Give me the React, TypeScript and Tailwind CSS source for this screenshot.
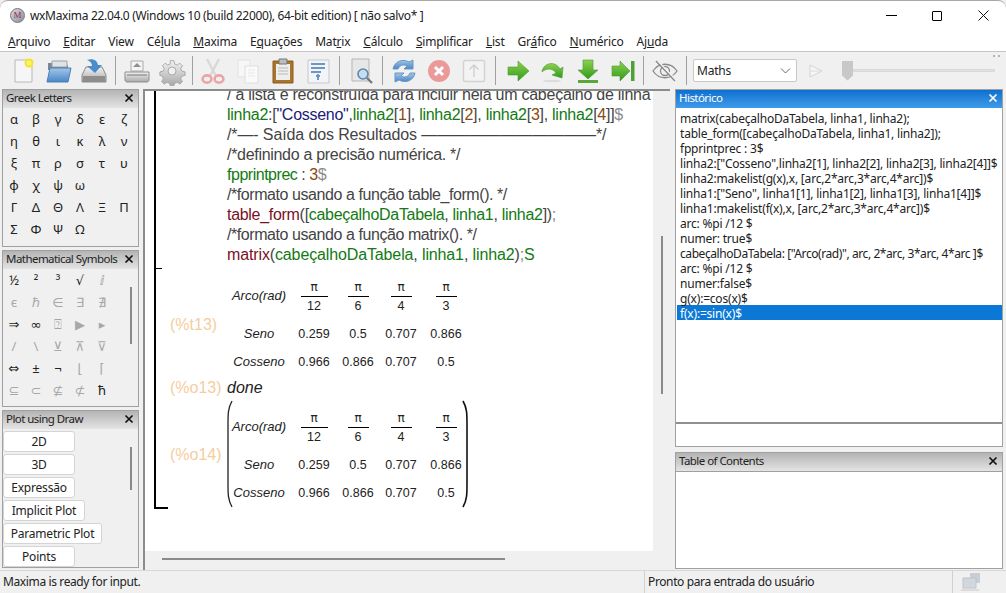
import React from "react";

const S = ({ w = 30, children }: { w?: number; children: React.ReactNode }) => (
  <svg width={w} height={30} viewBox="0 0 30 30" fill="none">{children}</svg>
);

const Defs = () => (
  <svg width="0" height="0" className="absolute">
    <defs>
      <linearGradient id="gr" x1="0" y1="0" x2="0" y2="1"><stop offset="0" stopColor="#8fd14f" /><stop offset="1" stopColor="#2f9a1c" /></linearGradient>
      <linearGradient id="bl" x1="0" y1="0" x2="0" y2="1"><stop offset="0" stopColor="#a3c6e8" /><stop offset="1" stopColor="#4a86c8" /></linearGradient>
      <linearGradient id="gy" x1="0" y1="0" x2="0" y2="1"><stop offset="0" stopColor="#f2f2f2" /><stop offset="1" stopColor="#a8a8a8" /></linearGradient>
    </defs>
  </svg>
);

const icons: Record<string, React.ReactNode> = {
  newdoc: <S><path d="M6 4h17v22H6z" fill="#f6f6f6" stroke="#b8b8b8" /><circle cx="20" cy="7" r="4.5" fill="#f3e52f" /><circle cx="20" cy="7" r="2.5" fill="#fbf36a" /></S>,
  open: <S><path d="M4 7h8l2 2h10v5H4z" fill="#7d8793" /><path d="M8 5h15v6H8z" fill="#dfe3e6" stroke="#9aa2a8" /><path d="M3 26l3-14h21l-3 14z" fill="url(#bl)" stroke="#4a7fb4" /></S>,
  save: <S><path d="M3 19l4-8h16l4 8v7H3z" fill="url(#gy)" stroke="#8a8a8a" /><path d="M4 20h22v6H4z" fill="#8d8d8d" /><path d="M8 4c6-2 10 0 11 5h4l-7 8-8-7h5c0-3-2-5-5-6z" fill="#4a8ccc" /></S>,
  print: <S><path d="M9 5h12v10H9z" fill="#f4f4f4" stroke="#aaa" /><path d="M15 7l-4 4h8z" fill="#8f8f8f" /><path d="M3 16h24v8c0 1-1 2-2 2H5c-1 0-2-1-2-2z" fill="url(#gy)" stroke="#8d8d8d" /><path d="M5 19h20" stroke="#777" /></S>,
  gear: <S><path d="M13 3h4l1 4 3 1 3-2 3 3-2 3 1 3 4 1v4l-4 1-1 3 2 3-3 3-3-2-3 1-1 3h-4l-1-3-3-1-3 2-3-3 2-3-1-3-3-1v-4l4-1 1-3-2-3 3-3 3 2 3-1z" transform="translate(2 2) scale(.87)" fill="url(#gy)" stroke="#a3a3a3" /><circle cx="15" cy="15" r="4" fill="#f0f0f0" stroke="#aaa" /></S>,
  cut: <S><path d="M9 3l9 17M21 3L12 20" stroke="#d8d8d8" strokeWidth="2.4" /><ellipse cx="9" cy="23" rx="4.4" ry="3.6" stroke="#eaa5a5" strokeWidth="2.6" /><ellipse cx="21" cy="23" rx="4.4" ry="3.6" stroke="#eaa5a5" strokeWidth="2.6" /></S>,
  copy: <S><path d="M5 4h12v17H5z" fill="#f7f7f7" stroke="#e2e2e2" /><path d="M12 10h13v17H12z" fill="#fafafa" stroke="#dedede" /><path d="M15 14h7M15 17h7M15 20h7" stroke="#e8e8e8" /></S>,
  paste: <S><path d="M5 5h20v22H5z" fill="#a8752f" stroke="#8a5c20" /><path d="M8 8h14v16H8z" fill="#eeeeee" /><path d="M11 3h8v5h-8z" fill="#bdbdbd" stroke="#777" /><path d="M10 12h10M10 15h10M10 18h10" stroke="#b9b9b9" /></S>,
  doc: <S><path d="M5 4h21v23H5z" fill="#f2f4f7" stroke="#c4c8cc" /><path d="M8 8h14M8 12h14M8 16h10M13 20h4" stroke="#6f97c4" strokeWidth="2" /><path d="M15 18v6" stroke="#6f97c4" strokeWidth="2" /></S>,
  find: <S><path d="M6 3h17v22H6z" fill="#e7e7e7" stroke="#b5b5b5" /><circle cx="17" cy="18" r="5" fill="#c7dcf0" stroke="#5d87ad" strokeWidth="1.6" /><path d="M21 22l5 5" stroke="#7a7a7a" strokeWidth="2.4" /></S>,
  refresh: <S><path d="M4 13C5 6 13 2 20 6l4-2v9h-9l3-3c-4-2-7-1-9 3z" fill="url(#bl)" stroke="#6a98c6" /><path d="M26 17c-1 7-9 11-16 7l-4 2v-9h9l-3 3c4 2 7 1 9-3z" fill="url(#bl)" stroke="#6a98c6" /></S>,
  stop: <S><circle cx="15" cy="15" r="11" fill="#eb9a9a" /><path d="M11 11l8 8M19 11l-8 8" stroke="#fff" strokeWidth="3" /></S>,
  up: <S><rect x="4.5" y="4.5" width="21" height="21" rx="2" fill="#f3f3f3" stroke="#d2d2d2" strokeWidth="1.4" /><path d="M15 21V9M10.5 13.5L15 9l4.5 4.5" stroke="#cfcfcf" strokeWidth="1.4" /></S>,
  right: <S><path d="M5 11h10V5l11 10-11 10v-6H5z" fill="url(#gr)" stroke="#4b9a34" strokeWidth=".6" /></S>,
  curve: <S><path d="M4 16C5 7 17 4 22 13l3-2-1 11-10-3 4-2c-3-5-10-5-14-1z" fill="url(#gr)" stroke="#4b9a34" strokeWidth=".6" /><ellipse cx="14" cy="25" rx="9" ry="1.3" fill="#dcdcdc" /></S>,
  down: <S><path d="M10 4h10v10h5L15 23 5 14h5z" fill="url(#gr)" stroke="#4b9a34" strokeWidth=".6" /><path d="M5 24h20v3H5z" fill="#58a83c" /></S>,
  end: <S><path d="M4 10h8V5l10 10-10 10v-5H4z" fill="url(#gr)" stroke="#4b9a34" strokeWidth=".6" /><path d="M23 5h3.5v20H23z" fill="#4da235" /></S>,
  eye: <S><path d="M3 15c6-9 18-9 24 0-6 9-18 9-24 0z" stroke="#8a8a8a" strokeWidth="1.3" /><circle cx="15" cy="15" r="4.5" stroke="#8a8a8a" strokeWidth="1.3" /><path d="M6 5l19 20" stroke="#8a8a8a" strokeWidth="1.5" /><path d="M8 5l19 20" stroke="#f0f0f0" strokeWidth="1.2" /></S>,
};

const Btn = ({ n }: { n: string }) => <div className="w-[35px] flex justify-center shrink-0">{icons[n]}</div>;
const Sep = ({ w }: { w: string }) => (
  <div className={`${w} h-[29px] shrink-0 flex justify-center`}><div className="w-px h-full bg-[#a0a0a0]" /></div>
);

const Head = ({ t, blue }: { t: string; blue?: boolean }) => (
  <div className={`h-[18px] pb-[2px] flex items-center justify-between pl-[3px] pr-[4px] text-[11.5px] tracking-[-0.55px] whitespace-nowrap shrink-0 ${blue ? "bg-gradient-to-b from-[#0a70cf] to-[#3f9bea] text-white" : "bg-gradient-to-b from-[#b4b4b4] to-[#e4e4e4] text-[#222]"}`}>
    <span>{t}</span>
    <svg width="10" height="10" viewBox="0 0 10 10"><path d="M1.5 1.5l7 7M8.5 1.5l-7 7" stroke={blue ? "#fff" : "#111"} strokeWidth="1.7" /></svg>
  </div>
);

const Glyphs = ({ cells }: { cells: [string, number][] }) => (
  <div className="flex-1 grid grid-cols-[repeat(6,22px)] auto-rows-[22px] text-[13px] leading-[22px] text-center tracking-normal font-['Noto_Sans','DejaVu_Sans',sans-serif]">
    {cells.map(([g, o], i) => (
      <span key={i} className={o === 1 ? "text-[#222]" : "text-[#a8a8a8]"}>{g}</span>
    ))}
  </div>
);

const greek = "α β γ δ ε ζ η θ ι κ λ ν ξ π ρ σ τ υ φ χ ψ ω _ _ Γ Δ Θ Λ Ξ Π Σ Φ Ψ Ω _ _".split(" ").map((c) => [c === "_" ? "" : c, 1] as [string, number]);

const mathCells: [string, number][] = [
  ["½", 1], ["²", 1], ["³", 1], ["√", 1], ["ⅈ", 2], ["", 0],
  ["ϵ", 2], ["ℏ", 2], ["∈", 2], ["∃", 2], ["∄", 2], ["", 0],
  ["⇒", 1], ["∞", 1], ["⍰", 2], ["▶", 2], ["▸", 2], ["", 0],
  ["/", 2], ["\\", 2], ["⊻", 2], ["⊼", 2], ["⊽", 2], ["", 0],
  ["⇔", 1], ["±", 1], ["¬", 1], ["⌊", 2], ["⌈", 2], ["", 0],
  ["⊆", 2], ["⊂", 2], ["⊈", 2], ["⊄", 2], ["ħ", 1], ["", 0],
];

const G = ({ children }: { children: React.ReactNode }) => <span className="text-[#127a12]">{children}</span>;
const N = ({ children }: { children: React.ReactNode }) => <span className="text-[#8a4a10]">{children}</span>;
const R = ({ children }: { children: React.ReactNode }) => <span className="text-[#7a0f1f]">{children}</span>;
const D = ({ children }: { children: React.ReactNode }) => <span className="text-[#8a8a8a]">{children}</span>;

const Frac = ({ d, w }: { d: string; w: string }) => (
  <div className="flex flex-col items-center">
    <div className="h-[15px] leading-[17px] font-['DejaVu_Sans',sans-serif] text-[12px]">π</div>
    <div className={`${w} h-px bg-black mt-[2px] mb-[1px]`} />
    <div className="h-[17px] leading-[17px]">{d}</div>
  </div>
);

const Table = () => (
  <div className="grid grid-cols-[64px_46px_42px_44px_46px] text-[12.5px] text-[#222] text-center items-center">
    <div className="italic text-[13px] h-[32px] leading-[32px] mb-[3px]">Arco(rad)</div>
    <Frac d="12" w="w-[27px]" />
    <Frac d="6" w="w-[21px]" />
    <Frac d="4" w="w-[21px]" />
    <Frac d="3" w="w-[21px]" />
    {["Seno", "0.259", "0.5", "0.707", "0.866"].map((t, i) => (
      <div key={i} className={`h-[28px] leading-[28px] mt-[5px] ${i === 0 ? "italic text-[13px]" : ""}`}>{t}</div>
    ))}
    {["Cosseno", "0.966", "0.866", "0.707", "0.5"].map((t, i) => (
      <div key={i} className={`h-[28px] leading-[28px] ${i === 0 ? "italic text-[13px]" : ""}`}>{t}</div>
    ))}
  </div>
);

const Label = ({ t, mb }: { t: string; mb?: string }) => (
  <div className={`w-[71px] pl-[14px] text-[16px] text-[#f5cda0] shrink-0 tracking-normal ${mb ?? ""}`}>{t}</div>
);

const hist = [
  "matrix(cabeçalhoDaTabela, linha1, linha2);",
  "table_form([cabeçalhoDaTabela, linha1, linha2]);",
  "fpprintprec : 3$",
  'linha2:["Cosseno",linha2[1], linha2[2], linha2[3], linha2[4]]$',
  "linha2:makelist(g(x),x, [arc,2*arc,3*arc,4*arc])$",
  'linha1:["Seno", linha1[1], linha1[2], linha1[3], linha1[4]]$',
  "linha1:makelist(f(x),x, [arc,2*arc,3*arc,4*arc])$",
  "arc: %pi /12 $",
  "numer: true$",
  'cabeçalhoDaTabela: ["Arco(rad)", arc, 2*arc, 3*arc, 4*arc ]$',
  "arc: %pi /12 $",
  "numer:false$",
  "g(x):=cos(x)$",
  "f(x):=sin(x)$",
];

const menus: [string, string, string][] = [
  ["", "A", "rquivo"], ["", "E", "ditar"], ["View", "", ""], ["Cé", "l", "ula"], ["", "M", "axima"], ["E", "q", "uações"],
  ["Mat", "r", "ix"], ["", "C", "álculo"], ["", "S", "implificar"], ["", "L", "ist"], ["Gr", "á", "fico"], ["", "N", "umérico"], ["Aj", "u", "da"],
];

export default function App() {
  return (
    <div className="w-[1006px] h-[593px] overflow-hidden flex flex-col bg-[#f0f0f0] font-['Noto_Sans','Open_Sans',sans-serif] tracking-[-0.2px] text-[#111] relative">
      <Defs />
      {/* title */}
      <div className="h-[32px] pb-[2px] bg-white rounded-t-[8px] border-t border-[#a8a8a8] flex items-center shrink-0">
        <div className="w-[15px] h-[15px] ml-[10px] rounded-full bg-gradient-to-br from-[#d9d9e2] to-[#8e8e9c] border border-[#777] flex items-center justify-center text-[9px] leading-none font-['Liberation_Serif',serif] text-[#9a2a4a]">M</div>
        <div className="ml-[5px] text-[12px] tracking-[-0.33px] text-[#222] whitespace-nowrap">wxMaxima 22.04.0 (Windows 10 (build 22000), 64-bit edition) [ não salvo* ]</div>
        <div className="ml-auto flex items-center">
          <div className="w-[46px] flex justify-center"><div className="w-[11px] h-px bg-black" /></div>
          <div className="w-[46px] flex justify-center"><div className="w-[10px] h-[10px] border border-black rounded-[1px]" /></div>
          <div className="w-[46px] flex justify-center"><svg width="11" height="11" viewBox="0 0 11 11"><path d="M.5.5l10 10M10.5.5l-10 10" stroke="#111" /></svg></div>
        </div>
      </div>
      {/* menu */}
      <div className="h-[20px] bg-white border-b border-[#c4c4c4] flex items-center pl-[8px] gap-[13px] text-[12px] text-[#222] shrink-0 whitespace-nowrap">
        {menus.map(([a, u, b], i) => (
          <span key={i}>{a}<span className="underline">{u}</span>{b}</span>
        ))}
      </div>
      {/* toolbar */}
      <div className="h-[37px] bg-[#f0f0f0] flex items-center pl-[6px] shrink-0 relative">
        <Btn n="newdoc" /><Btn n="open" /><Btn n="save" /><Sep w="w-[8px]" />
        <Btn n="print" /><Btn n="gear" /><Sep w="w-[6px]" />
        <Btn n="cut" /><Btn n="copy" /><Btn n="paste" /><Btn n="doc" /><Sep w="w-[8px]" />
        <Btn n="find" /><Sep w="w-[8px]" />
        <Btn n="refresh" /><Btn n="stop" /><Btn n="up" /><Sep w="w-[9px]" />
        <Btn n="right" /><Btn n="curve" /><Btn n="down" /><Btn n="end" /><Sep w="w-[7px]" />
        <Btn n="eye" /><Sep w="w-[8px]" />
        <div className="ml-[3px] w-[104px] h-[23px] bg-white border border-[#c8c8c8] rounded-[2px] flex items-center justify-between pl-[3px] pr-[5px] text-[12px] text-[#222] shrink-0">
          <span>Maths</span>
          <svg width="11" height="6" viewBox="0 0 11 6"><path d="M1 .5l4.5 4.5L10 .5" stroke="#666" fill="none" /></svg>
        </div>
        <svg className="ml-[11px] shrink-0" width="16" height="16" viewBox="0 0 16 16"><path d="M2 2l12 6-12 6z" fill="#f6f6f6" stroke="#d4d4d4" /><path d="M2 8h12" stroke="#dcdcdc" /></svg>
        <div className="ml-[18px] flex items-center shrink-0">
          <div className="w-[11px] h-[20px] bg-[#c8c8c8] [clip-path:polygon(0_0,100%_0,100%_75%,50%_100%,0_75%)]" />
          <div className="w-[142px] h-[3px] bg-[#e2e2e2] border-y border-[#d8d8d8]" />
        </div>
        <div className="absolute right-[6px] top-[3px] flex gap-[3px]">
          <div className="w-[2px] h-[2px] bg-[#b4b4b4]" />
          <div className="w-[2px] h-[2px] bg-[#b4b4b4]" />
        </div>
      </div>
      {/* main */}
      <div className="flex-1 flex min-h-0 bg-[#f0f0f0]">
        {/* left dock */}
        <div className="w-[145px] shrink-0 flex flex-col pl-[2px] pr-[4px] border-r-2 border-[#8c8c8c]">
          <div className="h-[158px] border border-[#a0a0a0] flex flex-col shrink-0">
            <Head t="Greek Letters" />
            <Glyphs cells={greek} />
          </div>
          <div className="h-[157px] mt-[3px] border border-[#a0a0a0] flex flex-col shrink-0 relative">
            <Head t="Mathematical Symbols" />
            <Glyphs cells={mathCells} />
            <div className="absolute left-[127px] top-[36px] w-[2px] h-[57px] bg-[#8a8a8a]" />
          </div>
          <div className="h-[158px] mt-[3px] border border-[#a0a0a0] flex flex-col relative shrink-0">
            <Head t="Plot using Draw" />
            <div className="flex flex-col items-start gap-[2px] pt-[2px] text-[12px] text-[#222]">
              {[["2D", "w-[72px]"], ["3D", "w-[72px]"], ["Expressão", "w-[72px]"], ["Implicit Plot", "w-[82px]"], ["Parametric Plot", "w-[99px]"], ["Points", "w-[72px]"]].map(([t, w]) => (
                <div key={t} className={`${w} h-[21px] bg-white border border-[#d4d4d4] rounded-[3px] flex items-center justify-center whitespace-nowrap`}>{t}</div>
              ))}
            </div>
            <div className="absolute left-[127px] top-[36px] w-[2px] h-[43px] bg-[#8a8a8a]" />
          </div>
        </div>
        {/* worksheet */}
        <div className="w-[525px] shrink-0 border-t-2 border-[#8c8c8c] flex flex-col relative overflow-hidden">
          <div className="w-[508px] h-[460px] bg-white overflow-hidden shrink-0 pl-[9px]">
            <div className="border-l-2 border-black w-[480px] h-[418px] relative flow-root">
              <div className="pl-[71px] -mt-[6px] text-[16px] leading-[20px] text-[#444] tracking-[-0.3px] whitespace-nowrap font-['Liberation_Sans',sans-serif]">
                <div className="tracking-[-0.25px]">/ a lista é reconstruída para incluir nela um cabeçalho de linha</div>
                <div className="tracking-[-0.27px]"><G>linha2</G>:[<span className="text-[#1a1a7a]">"Cosseno"</span>,<G>linha2</G>[<N>1</N>], <G>linha2</G>[<N>2</N>], <G>linha2</G>[<N>3</N>], <G>linha2</G>[<N>4</N>]]<D>$</D></div>
                <div className="tracking-[-0.12px]">/*—- Saída dos Resultados ———————————*/</div>
                <div>/*definindo a precisão numérica. */</div>
                <div className="tracking-[-0.48px]"><G>fpprintprec</G> : <N>3</N><D>$</D></div>
                <div className="tracking-[-0.43px]">/*formato usando a função table_form(). */</div>
                <div><R>table_form</R>([<G>cabeçalhoDaTabela</G>, <G>linha1</G>, <G>linha2</G>])<D>;</D></div>
                <div className="tracking-[-0.43px]">/*formato usando a função matrix(). */</div>
                <div className="tracking-[-0.13px]"><R>matrix</R>(<G>cabeçalhoDaTabela</G>, <G>linha1</G>, <G>linha2</G>)<D>;</D><G>S</G></div>
              </div>
              <div className="absolute left-0 top-[177px] w-[6px] h-px bg-black" />
              <div className="absolute left-0 bottom-0 w-[12px] h-[2px] bg-black" />
              <div className="font-['Liberation_Sans',sans-serif] tracking-normal">
                <div className="flex items-center mt-[14px] h-[97px]">
                  <Label t="(%t13)" mb="mb-[6px]" />
                  <Table />
                </div>
                <div className="flex items-center h-[24px]">
                  <Label t="(%o13)" />
                  <div className="italic text-[16px] text-[#222]">done</div>
                </div>
                <div className="flex items-center mt-[10px] h-[97px]">
                  <Label t="(%o14)" mb="mb-[8px]" />
                  <div className="relative">
                    <Table />
                    <svg className="absolute left-0 -top-[10px]" width="8" height="108" viewBox="0 0 8 108" fill="none"><path d="M5 1C1 8 1 14 1 24v60c0 10 0 16 4 23" stroke="#222" strokeWidth="1.3" /></svg>
                    <svg className="absolute right-0 -top-[10px]" width="8" height="108" viewBox="0 0 8 108" fill="none"><path d="M2 1c4 7 4 13 4 23v60c0 10 0 16-4 23" stroke="#111" strokeWidth="1.6" /></svg>
                  </div>
                </div>
              </div>
            </div>
          </div>
          <div className="absolute left-[516px] top-[145px] w-[2px] h-[158px] bg-[#8a8a8a]" />
          <div className="ml-[17px] mt-[7px] w-[343px] h-[2px] bg-[#8a8a8a]" />
        </div>
        {/* right dock */}
        <div className="flex-1 min-w-0 flex flex-col pl-[5px] pr-[3px]">
          <div className="h-[358px] border border-[#a0a0a0] flex flex-col shrink-0">
            <Head t="Histórico" blue />
            <div className="h-[316px] bg-white border-b-2 border-[#8f8f8f] pt-[2px] pl-[1px] text-[12px] tracking-[-0.2px] leading-[17px] text-[#222] whitespace-nowrap shrink-0">
              {hist.map((h, i) => (
                <div key={i} className={`h-[15px] pl-[3px] ${i === 13 ? "bg-[#0a78d4] text-white" : ""} ${i === 9 ? "tracking-[-0.42px]" : ""}`}>{h}</div>
              ))}
            </div>
            <div className="flex-1 bg-white" />
          </div>
          <div className="mt-[5px] h-[117px] border border-[#a0a0a0] flex flex-col shrink-0">
            <Head t="Table of Contents" />
            <div className="flex-1 bg-white border-t border-[#a0a0a0]" />
          </div>
        </div>
      </div>
      {/* status */}
      <div className="h-[23px] bg-[#f0f0f0] border-t border-[#d8d8d8] flex items-center text-[12px] tracking-[-0.38px] text-[#222] shrink-0">
        <div className="w-[645px] pl-[3px] border-r border-[#d0d0d0] h-full flex items-center">Maxima is ready for input.</div>
        <div className="w-[308px] pl-[3px] border-r border-[#d0d0d0] h-full flex items-center">Pronto para entrada do usuário</div>
        <svg className="ml-[6px]" width="24" height="20" viewBox="0 0 24 20" fill="none"><path d="M11 1h10v10H11z" fill="#c8ced6" /><path d="M4 6h13v10H4z" fill="#d2d7dd" stroke="#c0c4c8" /><path d="M2 17h18v2H2z" fill="#dcdcdc" /></svg>
      </div>
    </div>
  );
}
